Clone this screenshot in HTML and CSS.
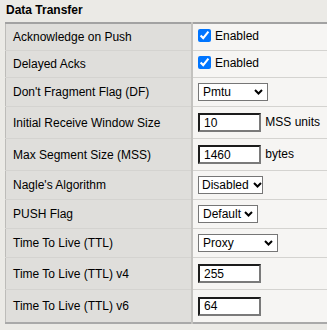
FILE: index.html
```html
<!DOCTYPE html>
<html>
<head>
<meta charset="utf-8">
<link rel="stylesheet" href="styles.css">
</head>
<body>
<div class="title">Data Transfer</div>
<table class="grid">
  <tr class="r-check"><td class="label">Acknowledge on Push</td><td class="value"><label class="chk"><input type="checkbox" checked> Enabled</label></td></tr>
  <tr class="r-check"><td class="label">Delayed Acks</td><td class="value"><label class="chk"><input type="checkbox" checked> Enabled</label></td></tr>
  <tr class="r-sel"><td class="label">Don't Fragment Flag (DF)</td><td class="value"><span class="selwrap"><select class="sel w70"><option>Pmtu</option></select><svg class="chev" viewBox="0 0 9 6" width="9" height="6"><path d="M1 1 L4.5 4.5 L8 1" fill="none" stroke="#000" stroke-width="2"/></svg></span></td></tr>
  <tr class="r-inp"><td class="label">Initial Receive Window Size</td><td class="value"><input class="txt" type="text" value="10"> MSS units</td></tr>
  <tr class="r-inp"><td class="label">Max Segment Size (MSS)</td><td class="value"><input class="txt" type="text" value="1460"> bytes</td></tr>
  <tr class="r-sel"><td class="label">Nagle's Algorithm</td><td class="value"><span class="selwrap"><select class="sel w65"><option>Disabled</option></select><svg class="chev tight" viewBox="0 0 9 6" width="9" height="6"><path d="M1 1 L4.5 4.5 L8 1" fill="none" stroke="#000" stroke-width="2"/></svg></span></td></tr>
  <tr class="r-sel"><td class="label">PUSH Flag</td><td class="value"><span class="selwrap"><select class="sel w60"><option>Default</option></select><svg class="chev" viewBox="0 0 9 6" width="9" height="6"><path d="M1 1 L4.5 4.5 L8 1" fill="none" stroke="#000" stroke-width="2"/></svg></span></td></tr>
  <tr class="r-sel"><td class="label">Time To Live (TTL)</td><td class="value"><span class="selwrap"><select class="sel w80"><option>Proxy</option></select><svg class="chev" viewBox="0 0 9 6" width="9" height="6"><path d="M1 1 L4.5 4.5 L8 1" fill="none" stroke="#000" stroke-width="2"/></svg></span></td></tr>
  <tr class="r-inp"><td class="label">Time To Live (TTL) v4</td><td class="value"><input class="txt" type="text" value="255"></td></tr>
  <tr class="r-inp last"><td class="label">Time To Live (TTL) v6</td><td class="value"><input class="txt" type="text" value="64"></td></tr>
</table>
</body>
</html>
```
FILE: styles.css
```css
html, body {
  margin: 0;
  padding: 0;
  background: #ebeae6;
  font-family: "Liberation Sans", Arial, sans-serif;
  font-size: 12px;
  color: #000;
}
.title {
  font-weight: bold;
  font-size: 12px;
  height: 22px;
  line-height: 21px;
  padding-left: 6px;
  box-sizing: border-box;
}
.grid {
  margin-left: 5px;
  width: calc(100% - 5px);
  border-collapse: collapse;
  border-top: 2px solid #a2a2a2;
  border-bottom: 2px solid #a9a9a9;
  border-left: 1px solid #bdbcb9;
}
.grid td {
  padding: 0;
  border-bottom: 1px solid #d4d3d0;
}
.grid tr:last-child td {
  border-bottom: none;
}
.label {
  width: 178px;
  background: #dfdedb;
  padding-left: 7px !important;
  border-right: 2px solid #c3c2bf;
}
.value {
  background: #f6f5f3;
  padding-left: 5px !important;
}
.r-check td { height: 26px; }
.r-sel td { height: 28px; }
.r-inp td { height: 31px; }
.r-inp.last td { height: 32px; }
.chk {
  display: inline-flex;
  align-items: center;
}
.chk input {
  margin: 0 4px 0 0;
  width: 13px;
  height: 13px;
}
.selwrap {
  position: relative;
  display: inline-block;
  vertical-align: middle;
}
.sel {
  -webkit-appearance: none;
  appearance: none;
  display: block;
  font-family: "Liberation Sans", Arial, sans-serif;
  font-size: 12px;
  height: 18px;
  margin: 0;
  padding: 0 0 0 4px;
  border: 1px solid #767676;
  border-radius: 0;
  background: #fff;
  color: #000;
  line-height: 16px;
}
.chev {
  position: absolute;
  right: 5px;
  top: 6px;
  pointer-events: none;
}
.chev.tight {
  right: 1px;
}
.w70 { width: 70px; }
.w65 { width: 65px; }
.w60 { width: 60px; }
.w80 { width: 80px; }
.w65 {
  padding-left: 3px;
}
.txt {
  font-family: "Liberation Sans", Arial, sans-serif;
  font-size: 12px;
  width: 63px;
  height: 19px;
  box-sizing: border-box;
  margin: 0 1px 0 0;
  padding: 0 4px;
  border-style: solid;
  border-width: 2px;
  border-color: #1c1c1c #7a7a7a #7a7a7a #1c1c1c;
  background: #fff;
  vertical-align: middle;
}
```
